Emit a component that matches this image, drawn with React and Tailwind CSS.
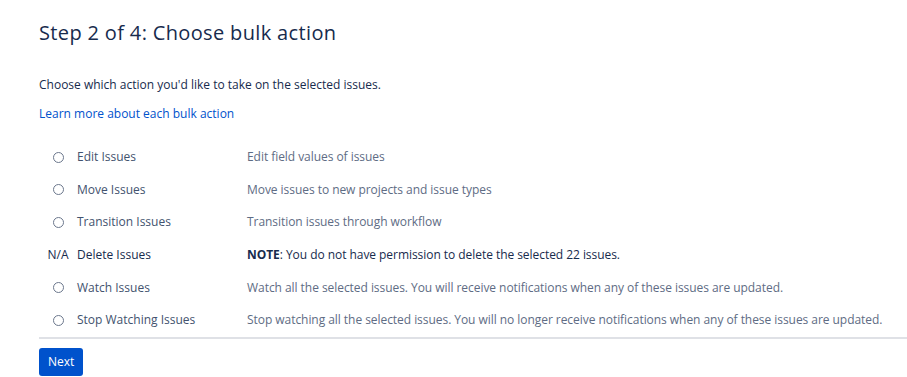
import React from "react";

const actions = [
  { id: "edit", label: "Edit Issues", desc: "Edit field values of issues" },
  { id: "move", label: "Move Issues", desc: "Move issues to new projects and issue types" },
  { id: "transition", label: "Transition Issues", desc: "Transition issues through workflow" },
  { id: "delete", label: "Delete Issues", na: true },
  { id: "watch", label: "Watch Issues", desc: "Watch all the selected issues. You will receive notifications when any of these issues are updated." },
  { id: "unwatch", label: "Stop Watching Issues", desc: "Stop watching all the selected issues. You will no longer receive notifications when any of these issues are updated." },
];

const App = () => {
  return (
    <div className="min-h-[377px] bg-white pl-[39px] pt-[19px] text-[12px] text-[#172b4d]" style={{ fontFamily: '"Open Sans", "Noto Sans", sans-serif' }}>
      <h2 className="text-[20px] leading-[28px] font-medium tracking-[0.35px] text-[#172b4d]">Step 2 of 4: Choose bulk action</h2>

      <p className="mt-[30px] leading-[16px]">Choose which action you'd like to take on the selected issues.</p>
      <a href="#" className="mt-[13px] block w-fit leading-[16px] text-[#0052cc]">Learn more about each bulk action</a>

      <div className="mt-[19px] border-b-2 border-[#dfe1e6]">
        {actions.map((a) => (
          <div key={a.id} className="flex h-[32.6px] items-center">
            <div className="flex w-[38px] items-center justify-center">
              {a.na ? (
                <span className="text-[#172b4d]">N/A</span>
              ) : (
                <span className="block h-[11px] w-[11px] rounded-full border border-[#6b778c]" />
              )}
            </div>
            <div className={`w-[170px] ${a.na ? "text-[#172b4d]" : "text-[#42526e]"}`}>{a.label}</div>
            <div className="tracking-[-0.05px] text-[#5e6c84]">
              {a.na ? (
                <span className="text-[#172b4d]">
                  <b className="font-bold">NOTE</b>: You do not have permission to delete the selected 22 issues.
                </span>
              ) : (
                a.desc
              )}
            </div>
          </div>
        ))}
      </div>

      <button className="mt-[9px] h-[28px] rounded-[3px] bg-[#0052cc] px-[9px] text-[12px] text-white">Next</button>
    </div>
  );
};

export default App;
